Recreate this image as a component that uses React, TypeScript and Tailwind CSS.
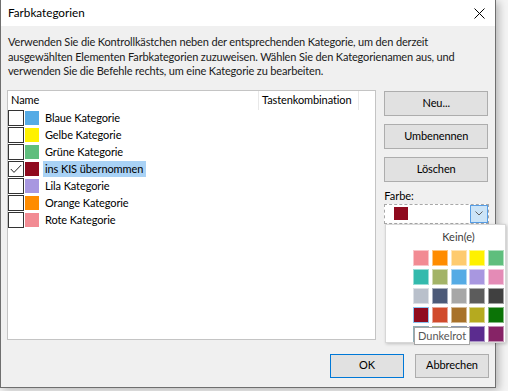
import React from 'react';

const font = { fontFamily: 'Lato, "Noto Sans", sans-serif' };

type Category = { name: string; color: string; checked?: boolean; selected?: boolean };

const categories: Category[] = [
  { name: 'Blaue Kategorie', color: '#55abe5' },
  { name: 'Gelbe Kategorie', color: '#fff100' },
  { name: 'Grüne Kategorie', color: '#5fbe7d' },
  { name: 'ins KIS übernommen', color: '#8f0a1e', checked: true, selected: true },
  { name: 'Lila Kategorie', color: '#a897e0' },
  { name: 'Orange Kategorie', color: '#ff8c00' },
  { name: 'Rote Kategorie', color: '#f28b93' },
];

// Farbpalette, 5 Spalten
const palette = [
  '#f28b93', '#ff8c00', '#fecb6f', '#fff100', '#5fbe7d',
  '#33baad', '#a3b367', '#55abe5', '#a897e0', '#e48bb6',
  '#b9c0cb', '#4c5a78', '#a7a7a7', '#5c5c5c', '#404040',
  '#900c1f', '#d14b2c', '#a8722b', '#b5aa1f', '#0b7306',
  '#1e5f6e', '#5f6b27', '#1f3b6b', '#5b2c8f', '#862366',
];

function WinButton({ label, className = '' }: { label: string; className?: string }) {
  return (
    <div
      className={`h-[25px] flex items-center justify-center bg-[#e1e1e1] border border-[#adadad] text-[11px] tracking-[-0.1px] text-black ${className}`}
    >
      {label}
    </div>
  );
}

export default function App() {
  return (
    <div className="relative w-[508px] h-[391px] bg-[#f4f4f4] overflow-hidden whitespace-nowrap" style={font}>
      {/* Dialogfenster */}
      <div className="w-[496px] h-[388px] flex flex-col border-l border-r border-b border-[#6f6f6f] bg-[#f0f0f0] shadow-[3px_2px_8px_rgba(0,0,0,0.25)]">
        {/* Titelleiste */}
        <div className="h-[26px] shrink-0 bg-white flex items-center justify-between pl-[7px] pr-[9px]">
          <span className="text-[11.7px] text-black">Farbkategorien</span>
          <svg width="11" height="11" viewBox="0 0 11 11" className="mr-[1px]">
            <path d="M0.5 0.5 L10.5 10.5 M10.5 0.5 L0.5 10.5" stroke="#000" strokeWidth="1" />
          </svg>
        </div>

        <div className="flex-1 flex flex-col px-[6px]">
          {/* Beschreibung */}
          <p className="pt-[9px] pl-[1px] text-[11px] tracking-[-0.15px] leading-[14.5px] text-[#1a1a1a]">
            Verwenden Sie die Kontrollkästchen neben der entsprechenden Kategorie, um den derzeit
            <br />
            ausgewählten Elementen Farbkategorien zuzuweisen. Wählen Sie den Kategorienamen aus, und
            <br />
            verwenden Sie die Befehle rechts, um eine Kategorie zu bearbeiten.
          </p>

          <div className="mt-[11px] flex gap-[8px]">
            {/* Liste */}
            <div className="w-[370px] h-[250px] bg-white border border-[#c4c4c4] text-[11px] tracking-[-0.1px]">
              <div className="h-[19px] flex items-center text-black">
                <span className="w-[250px] pl-[3px]">Name</span>
                <span className="h-full border-l border-[#e8e8e8]" />
                <span className="w-[99px] pl-[3px]">Tastenkombination</span>
                <span className="h-full border-l border-[#e8e8e8]" />
              </div>
              {categories.map(c => (
                <div key={c.name} className="h-[17px] flex items-center">
                  <div className="w-[16px] h-[16px] border border-[#333] bg-white flex items-center justify-center">
                    {c.checked && (
                      <svg width="12" height="10" viewBox="0 0 12 10">
                        <path d="M0.8 5 L4 8.4 L11.2 1" stroke="#222" strokeWidth="1" fill="none" />
                      </svg>
                    )}
                  </div>
                  <div className="ml-[1px] w-[14px] h-[14px]" style={{ backgroundColor: c.color }} />
                  <span
                    className={`ml-[4px] h-[16px] flex items-center pl-[2px] pr-[3px] text-black ${
                      c.selected ? 'bg-[#a9d2f5]' : ''
                    }`}
                  >
                    {c.name}
                  </span>
                </div>
              ))}
            </div>

            {/* Befehle rechts */}
            <div className="w-[105px] flex flex-col pt-[1px]">
              <WinButton label="Neu..." className="w-[104px]" />
              <WinButton label="Umbenennen" className="w-[104px] mt-[8px]" />
              <WinButton label="Löschen" className="w-[104px] mt-[8px]" />
              <span className="mt-[6px] text-[11px] leading-[15px] text-black">Farbe:</span>
              <div className="mt-[1px] h-[20px] flex bg-white border border-dashed border-[#a8a8a8]">
                <div className="flex-1 flex items-center pl-[9px]">
                  <div className="w-[14px] h-[13px] bg-[#8f0a1e]" />
                </div>
                <div className="w-[18px] h-full bg-[#cce4f7] border border-[#569de5] flex items-center justify-center">
                  <svg width="8" height="5" viewBox="0 0 8 5">
                    <path d="M0.5 0.5 L4 4 L7.5 0.5" stroke="#606060" strokeWidth="1" fill="none" />
                  </svg>
                </div>
              </div>
            </div>
          </div>

          {/* OK / Abbrechen */}
          <div className="mt-[14px] flex justify-end gap-[11px]">
            <div className="w-[74px] h-[24px] flex items-center justify-center bg-[#e1e1e1] border border-[#0078d7] text-[11px] text-black">
              OK
            </div>
            <div className="w-[74px] h-[24px] flex items-center justify-center bg-[#e1e1e1] border border-[#adadad] text-[11px] tracking-[-0.1px] text-black">
              Abbrechen
            </div>
          </div>
        </div>
      </div>

      {/* Farbauswahl-Popup */}
      <div className="absolute left-[385px] top-[224px] w-[121px] h-[119px] bg-white border border-[#d7d7d7] shadow-[1px_1px_3px_rgba(0,0,0,0.2)] pl-[27px] pt-[4px]">
        <div className="w-[91px] text-center text-[11px] leading-[16px] text-[#3c3c3c]">Kein(e)</div>
        <div className="mt-[5px] grid grid-cols-5 gap-x-[3px] gap-y-[3px] w-[91px]">
          {palette.map((col, i) => (
            <div
              key={i}
              className={`w-[16px] h-[16px] border ${i === 15 ? 'border-[#8cc2ee]' : 'border-white/50'}`}
              style={{ backgroundColor: col }}
            />
          ))}
        </div>
      </div>

      {/* Tooltip */}
      <div className="absolute left-[414px] top-[327px] h-[18px] px-[3px] flex items-center bg-white border border-[#a5a5a5] text-[11px] text-[#575757]">
        Dunkelrot
      </div>
    </div>
  );
}
